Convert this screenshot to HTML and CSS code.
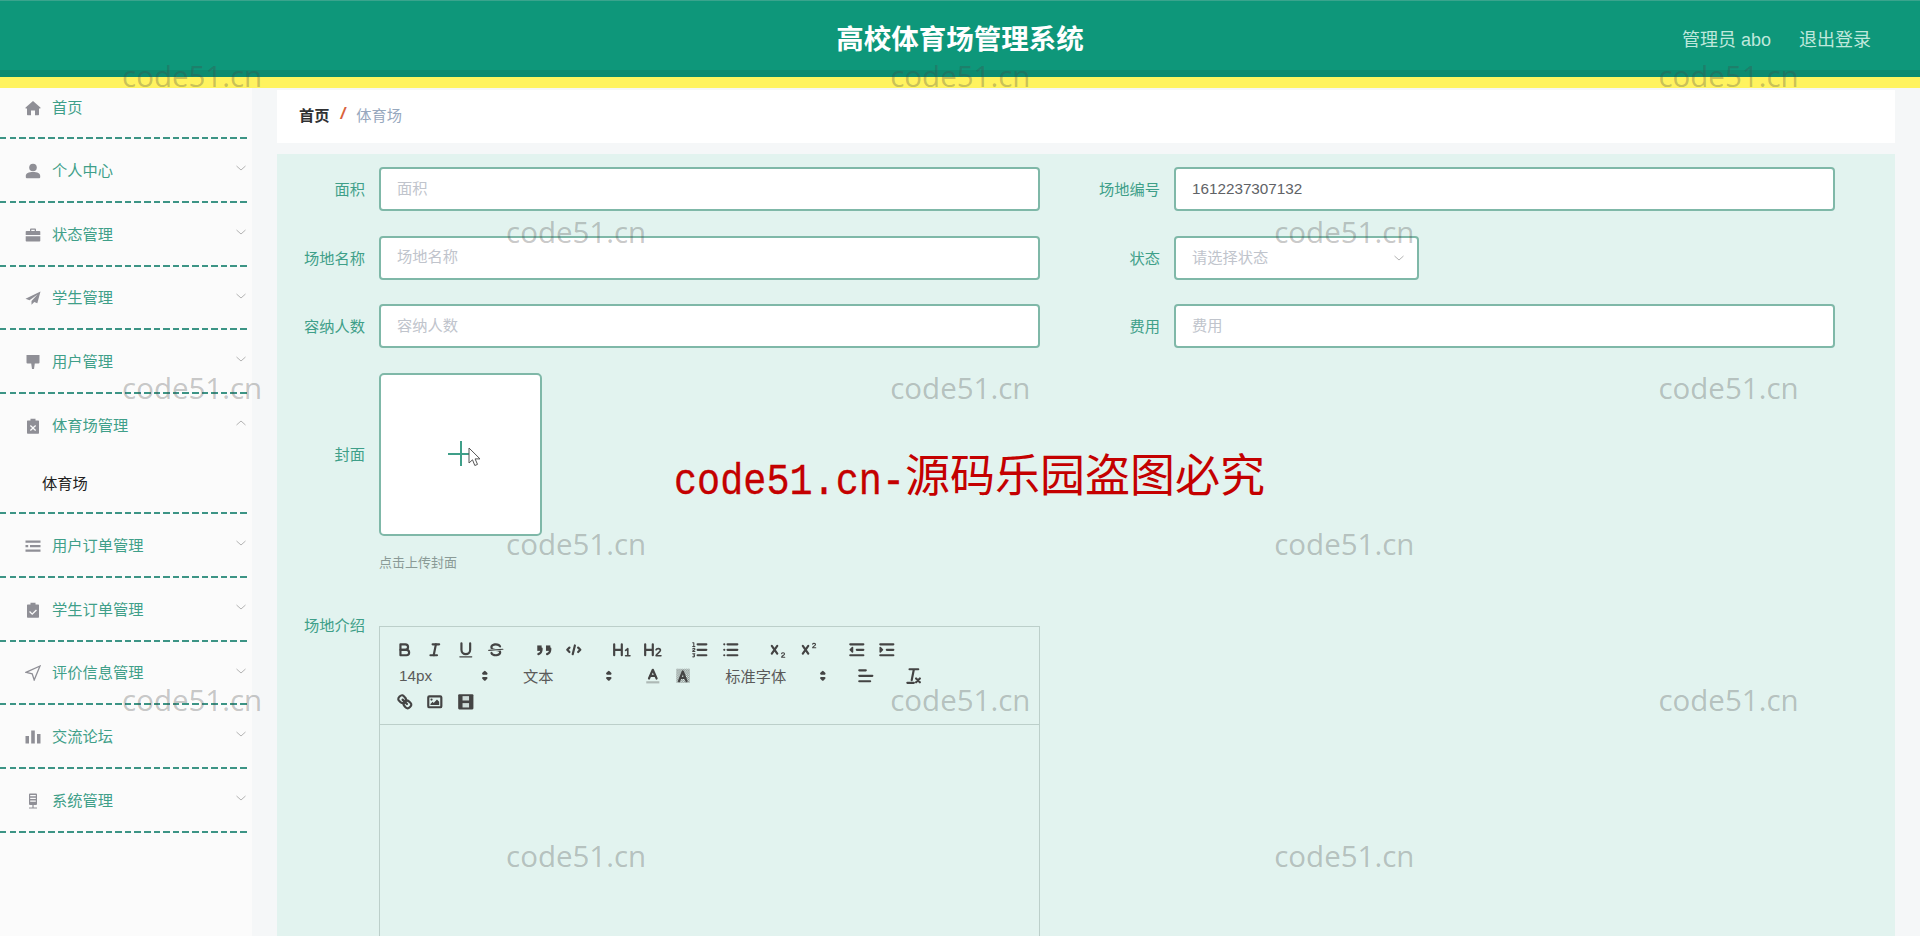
FILE: index.html
```html
<!DOCTYPE html>
<html lang="zh-CN">
<head>
    <meta charset="UTF-8">
    <meta name="viewport" content="width=device-width, initial-scale=1.0">
    <title>高校体育场管理系统</title>
    <link rel="stylesheet" href="styles.css">
</head>
<body>
    <header class="topbar">
        <h1 class="topbar-title">高校体育场管理系统</h1>
        <div class="topbar-user">
            <span class="user-name">管理员 abo</span>
            <a class="logout">退出登录</a>
        </div>
    </header>

    <div class="layout">
        <nav class="sidebar">
            <div class="menu-item menu-first">
                <svg class="menu-icon" viewBox="0 0 16 16"><path d="M8 1 .6 7.600c-.4.4 0 1 .5 1H2V14.500a.7.7 0 0 0 .7.7h3.300V10.500h4v4.700h3.300a.7.700 0 0 0 .7-.7V8.600h.9c.5 0 .9-.6.5-1z"/></svg>
                <span>首页</span>
            </div>
            <div class="menu-item">
                <svg class="menu-icon" viewBox="0 0 16 16"><circle cx="8" cy="4.500" r="3.800"/><path d="M.8 13c0-2.800 2.800-4 7.200-4s7.200 1.200 7.200 4v1.300a1 1 0 0 1-1 1H1.800a1 1 0 0 1-1-1z"/></svg>
                <span>个人中心</span>
                <svg class="menu-arrow" viewBox="0 0 12 12"><polyline points="1.500 4 6 8 10.500 4"/></svg>
            </div>
            <div class="menu-item">
                <svg class="menu-icon" viewBox="0 0 16 16"><path d="M5 4V2.500A1 1 0 0 1 6 1.500h4a1 1 0 0 1 1 1V4h3.500a.8.8 0 0 1 .8.8V8H.7V4.800A.8.800 0 0 1 1.500 4zm1.300 0h3.400V2.800H6.300zM.7 9.200h14.600v4.600a.8.8 0 0 1-.8.8h-13a.8.8 0 0 1-.8-.8z"/></svg>
                <span>状态管理</span>
                <svg class="menu-arrow" viewBox="0 0 12 12"><polyline points="1.500 4 6 8 10.500 4"/></svg>
            </div>
            <div class="menu-item">
                <svg class="menu-icon" viewBox="0 0 16 16"><path d="M15.500 1.500.5 8.800l4 1.500L12.500 4.500 6.500 11v3.800l2.800-2.900 3 1.300z"/></svg>
                <span>学生管理</span>
                <svg class="menu-arrow" viewBox="0 0 12 12"><polyline points="1.500 4 6 8 10.500 4"/></svg>
            </div>
            <div class="menu-item">
                <svg class="menu-icon" viewBox="0 0 16 16"><path d="M1.500 1h13v7.500a1 1 0 0 1-1 1H9.800l-.8 5.500H7l-.8-5.500H2.500a1 1 0 0 1-1-1z"/></svg>
                <span>用户管理</span>
                <svg class="menu-arrow" viewBox="0 0 12 12"><polyline points="1.500 4 6 8 10.500 4"/></svg>
            </div>
            <div class="menu-item menu-open">
                <svg class="menu-icon" viewBox="0 0 16 16"><path fill-rule="evenodd" d="M5.500 2.500V.8h5v1.700h2.800a.7.7 0 0 1 .7.700v11.800a.7.7 0 0 1-.7.700H2.700a.7.700 0 0 1-.7-.7V3.200a.7.7 0 0 1 .7-.7zM5.800 7l-.9.900L7.100 10 4.900 12.100l.9.900L8 10.900 10.200 13l.9-.9L8.900 10l2.200-2.100-.9-.9L8 9.100z"/></svg>
                <span>体育场管理</span>
                <svg class="menu-arrow" viewBox="0 0 12 12"><polyline points="1.500 8 6 4 10.500 8"/></svg>
            </div>
            <div class="menu-sub">体育场</div>
            <div class="menu-item">
                <svg class="menu-icon" viewBox="0 0 16 16"><path d="M.5 2.500h15v2.200H.5zM5 7h10.500v2.200H5zM.5 7h2.700v2.200H.500zM.5 11.500h15v2.200H.5z"/></svg>
                <span>用户订单管理</span>
                <svg class="menu-arrow" viewBox="0 0 12 12"><polyline points="1.500 4 6 8 10.500 4"/></svg>
            </div>
            <div class="menu-item">
                <svg class="menu-icon" viewBox="0 0 16 16"><path fill-rule="evenodd" d="M5.500 2.500V.8h5v1.700h2.800a.7.7 0 0 1 .7.700v11.800a.7.7 0 0 1-.7.700H2.700a.7.700 0 0 1-.7-.7V3.200a.7.7 0 0 1 .7-.7zM11 7.500 7.200 11.200 5 9.100l-.9.900 3.100 3 4.700-4.600z"/></svg>
                <span>学生订单管理</span>
                <svg class="menu-arrow" viewBox="0 0 12 12"><polyline points="1.500 4 6 8 10.500 4"/></svg>
            </div>
            <div class="menu-item">
                <svg class="menu-icon menu-icon-line" viewBox="0 0 16 16"><path d="M15 1 1 7.300l6.200 1.500L9.200 15z"/></svg>
                <span>评价信息管理</span>
                <svg class="menu-arrow" viewBox="0 0 12 12"><polyline points="1.500 4 6 8 10.500 4"/></svg>
            </div>
            <div class="menu-item">
                <svg class="menu-icon" viewBox="0 0 16 16"><path d="M.5 7h3.500v7.500H.5zM6.200 1.500h3.600v13H6.200zM12 5h3.500v9.500H12z"/></svg>
                <span>交流论坛</span>
                <svg class="menu-arrow" viewBox="0 0 12 12"><polyline points="1.500 4 6 8 10.500 4"/></svg>
            </div>
            <div class="menu-item">
                <svg class="menu-icon" viewBox="0 0 16 16"><path fill-rule="evenodd" d="M5 .5h6a1 1 0 0 1 1 1V11a1 1 0 0 1-1 1H5a1 1 0 0 1-1-1V1.500a1 1 0 0 1 1-1zM5.200 2v1.200h5.600V2zm0 2.800V6h5.600V4.800zm0 2.800v1.200h5.600V7.600zM7.400 12h1.200v2.500H12v1H4v-1h3.400z"/></svg>
                <span>系统管理</span>
                <svg class="menu-arrow" viewBox="0 0 12 12"><polyline points="1.500 4 6 8 10.500 4"/></svg>
            </div>
        </nav>

        <main class="main">
            <div class="breadcrumb">
                <span class="crumb-home">首页</span>
                <span class="crumb-sep">/</span>
                <span class="crumb-now">体育场</span>
            </div>

            <form class="form">
                <div class="form-grid">
                    <div class="field">
                        <label class="field-label">面积</label>
                        <input class="field-input" type="text" placeholder="面积">
                    </div>
                    <div class="field">
                        <label class="field-label">场地编号</label>
                        <input class="field-input" type="text" value="1612237307132">
                    </div>
                    <div class="field">
                        <label class="field-label">场地名称</label>
                        <input class="field-input" type="text" placeholder="场地名称">
                    </div>
                    <div class="field">
                        <label class="field-label">状态</label>
                        <div class="field-select">
                            <span>请选择状态</span>
                            <svg class="select-arrow" viewBox="0 0 12 12"><polyline points="1.500 4 6 8 10.500 4"/></svg>
                        </div>
                    </div>
                    <div class="field">
                        <label class="field-label">容纳人数</label>
                        <input class="field-input" type="text" placeholder="容纳人数">
                    </div>
                    <div class="field">
                        <label class="field-label">费用</label>
                        <input class="field-input" type="text" placeholder="费用">
                    </div>
                </div>

                <div class="field field-upload">
                    <label class="field-label">封面</label>
                    <div class="upload">
                        <span class="upload-plus"></span>
                        <svg class="cursor" viewBox="0 0 13 20"><path d="M1 1v15l3.500-3.200 2.300 5.700 2.700-1.100-2.400-5.500H12z"/></svg>
                    </div>
                </div>
                <p class="upload-tip">点击上传封面</p>

                <div class="field field-editor">
                    <label class="field-label">场地介绍</label>
                    <div class="editor">
                        <div class="toolbar">
                            <span class="tool-group">
                                <button type="button" class="tool"><svg viewBox="0 0 18 18"><path class="st" d="M5 4h4.500a2.500 2.500 0 0 1 0 5H5z"/><path class="st" d="M5 9h5.500a2.500 2.500 0 0 1 0 5H5z"/></svg></button>
                                <button type="button" class="tool"><svg viewBox="0 0 18 18"><line class="st" x1="7" x2="13" y1="4" y2="4"/><line class="st" x1="5" x2="11" y1="14" y2="14"/><line class="st" x1="8" x2="10" y1="14" y2="4"/></svg></button>
                                <button type="button" class="tool"><svg viewBox="0 0 18 18"><path class="st" d="M5 3v6a4 4 0 0 0 4 4 4 4 0 0 0 4-4V3"/><rect class="fl" x="3" y="15" width="12" height="1" rx=".5"/></svg></button>
                                <button type="button" class="tool"><svg viewBox="0 0 18 18"><line class="th" x1="15.500" x2="2.500" y1="8.500" y2="9.500"/><path class="fl" d="M9 8C6.500 7.800 6 7.500 6 6.500 6 5.800 7.300 5 9 5c1.600 0 2.800.7 3 1.300a1 1 0 0 0 1.900-.6C13.400 4.100 11.400 3 9 3 6.200 3 4 4.500 4 6.500a3.200 3.200 0 0 0 .5 1.800z"/><path class="fl" d="M9 10c2.500.2 3 .5 3 1.500 0 .7-1.300 1.500-3 1.500-1.600 0-2.800-.7-3-1.300a1 1 0 1 0-1.900.6C4.600 13.900 6.600 15 9 15c2.800 0 5-1.500 5-3.500a3.200 3.200 0 0 0-.5-1.800z"/></svg></button>
                            </span>
                            <span class="tool-group">
                                <button type="button" class="tool"><svg viewBox="0 0 18 18"><rect class="fl" x="3" y="5" width="4" height="5"/><rect class="fl" x="11" y="5" width="4" height="5"/><path class="st" d="M7 8c0 4-3 5-3 5"/><path class="st" d="M15 8c0 4-3 5-3 5"/></svg></button>
                                <button type="button" class="tool"><svg viewBox="0 0 18 18"><polyline class="st" points="5 7 3 9 5 11"/><polyline class="st" points="13 7 15 9 13 11"/><line class="st" x1="10" x2="8" y1="5" y2="13"/></svg></button>
                            </span>
                            <span class="tool-group">
                                <button type="button" class="tool"><svg viewBox="0 0 18 18"><path class="st" d="M2 4v10M9 4v10M2 9h7"/><path class="st1" d="M12.500 9.500 14.500 8v6M12.500 14.500h4"/></svg></button>
                                <button type="button" class="tool"><svg viewBox="0 0 18 18"><path class="st" d="M2 4v10M9 4v10M2 9h7"/><path class="st1" d="M12 9c.5-1.500 4-1.500 4 .5S12 12.500 12 14.500h4.500"/></svg></button>
                            </span>
                            <span class="tool-group">
                                <button type="button" class="tool"><svg viewBox="0 0 18 18"><path class="st" d="M7 4h8M7 9h8M7 14h8"/><path class="th" d="M2.500 2.500h1v3.500M2.500 6h2M2.500 8.200c1-1 2-.5 2 .2s-2 1.400-2 2.100h2M2.500 12.600h2l-1 1.200c1 0 1 2-1 1.600"/></svg></button>
                                <button type="button" class="tool"><svg viewBox="0 0 18 18"><path class="st" d="M6 4h9M6 9h9M6 14h9M3 4h0M3 9h0M3 14h0"/></svg></button>
                            </span>
                            <span class="tool-group">
                                <button type="button" class="tool"><svg viewBox="0 0 18 18"><path class="st" d="M3.500 5.500 8.500 12.500M8.500 5.500 3.500 12.500"/><path class="th" d="M12.500 12.500c.3-1 2.700-1 2.700.3s-2.700 1.700-2.700 3h2.900"/></svg></button>
                                <button type="button" class="tool"><svg viewBox="0 0 18 18"><path class="st" d="M3.500 5.500 8.500 12.500M8.500 5.500 3.500 12.500"/><path class="th" d="M12.500 3.800c.3-1 2.700-1 2.700.3s-2.700 1.700-2.700 3h2.900"/></svg></button>
                            </span>
                            <span class="tool-group">
                                <button type="button" class="tool"><svg viewBox="0 0 18 18"><path class="st" d="M3 14h12M3 4h12M9 9h6"/><polygon class="st1 fl" points="5 7 5 11 3 9"/></svg></button>
                                <button type="button" class="tool"><svg viewBox="0 0 18 18"><path class="st" d="M3 14h12M3 4h12M9 9h6"/><polygon class="st1 fl" points="3 7 3 11 5 9"/></svg></button>
                            </span>
                            <span class="tool-group">
                                <span class="picker">
                                    <span>14px</span>
                                    <svg viewBox="0 0 18 18"><polygon class="st fl" points="7.500 11 9 12.500 10.500 11"/><polygon class="st fl" points="7.500 7 9 5.500 10.500 7"/></svg>
                                </span>
                            </span>
                            <span class="tool-group">
                                <span class="picker">
                                    <span>文本</span>
                                    <svg viewBox="0 0 18 18"><polygon class="st fl" points="7.500 11 9 12.500 10.500 11"/><polygon class="st fl" points="7.500 7 9 5.500 10.500 7"/></svg>
                                </span>
                            </span>
                            <span class="tool-group">
                                <button type="button" class="tool"><svg viewBox="0 0 18 18"><line class="color-line" x1="3" x2="15" y1="15" y2="15"/><polyline class="st" points="5.500 11.500 9 3.500 12.500 11.500"/><line class="st" x1="11" x2="7" y1="9" y2="9"/></svg></button>
                                <button type="button" class="tool"><svg viewBox="0 0 18 18"><defs><pattern id="dots" width="2" height="2" patternUnits="userSpaceOnUse"><rect class="fl" width="1" height="1"/><rect class="fl" x="1" y="1" width="1" height="1"/></pattern></defs><rect class="bg-hatch" x="3" y="2.500" width="12.500" height="13" fill="url(#dots)"/><polyline class="st" points="5.500 14 9 5 12.500 14"/><line class="st" x1="11" x2="7" y1="11" y2="11"/></svg></button>
                            </span>
                            <span class="tool-group">
                                <span class="picker picker-wide">
                                    <span>标准字体</span>
                                    <svg viewBox="0 0 18 18"><polygon class="st fl" points="7.500 11 9 12.500 10.500 11"/><polygon class="st fl" points="7.500 7 9 5.500 10.500 7"/></svg>
                                </span>
                            </span>
                            <span class="tool-group">
                                <button type="button" class="tool"><svg viewBox="0 0 18 18"><path class="st" d="M3 9h12M3 14h10M3 4h6"/></svg></button>
                            </span>
                            <span class="tool-group">
                                <button type="button" class="tool"><svg viewBox="0 0 18 18"><path class="st" d="M6 3h8M10 3 8 13M4 15.500h6"/><path class="st" d="M12 11.500l3.500 3.500M15.500 11.500 12 15"/></svg></button>
                            </span>
                            <span class="tool-group">
                                <button type="button" class="tool"><svg viewBox="0 0 18 18"><line class="st" x1="7" x2="11" y1="7" y2="11"/><path class="st" d="M8.900 4.600a3.500 3.500 0 0 1 .4 4.700 3.500 3.500 0 0 1-4.700-.4C3.200 7.500 2 6.400 4.200 4.200S7.500 3.200 8.900 4.600z"/><path class="st" d="M13.400 9.100a3.500 3.500 0 0 0-4.700-.4 3.500 3.500 0 0 0 .4 4.700c1.400 1.400 2.500 2.600 4.700.4s1-3.300-.4-4.700z"/></svg></button>
                                <button type="button" class="tool"><svg viewBox="0 0 18 18"><rect class="st" x="3" y="4" width="12" height="10" rx="1"/><circle class="fl" cx="6" cy="7" r="1"/><polygon class="fl" points="5 12 5 11 7 9 8 10 11 7 13 9 13 12"/></svg></button>
                                <button type="button" class="tool"><svg viewBox="0 0 18 18"><rect class="fl" x="2" y="2" width="14" height="14" rx="1"/><rect class="video-window" x="6" y="3.800" width="6" height="4"/><rect class="video-window" x="6" y="10.200" width="6" height="4"/></svg></button>
                            </span>
                        </div>
                        <div class="editor-body"></div>
                    </div>
                </div>
            </form>
        </main>
    </div>

    <!-- overlays baked into the picture -->
    <div class="watermarks">
        <div class="wm-row"><span>code51.cn</span><span>code51.cn</span><span>code51.cn</span></div>
        <div class="wm-row wm-row-shift"><span>code51.cn</span><span>code51.cn</span></div>
        <div class="wm-row"><span>code51.cn</span><span>code51.cn</span><span>code51.cn</span></div>
        <div class="wm-row wm-row-shift"><span>code51.cn</span><span>code51.cn</span></div>
        <div class="wm-row"><span>code51.cn</span><span>code51.cn</span><span>code51.cn</span></div>
        <div class="wm-row wm-row-shift"><span>code51.cn</span><span>code51.cn</span></div>
    </div>
    <div class="stamp"><span class="stamp-latin">code51.cn-</span>源码乐园盗图必究</div>
</body>
</html>
```

FILE: styles.css
```css
* {
    box-sizing: border-box;
}

html, body {
    margin: 0;
    height: 100%;
}

body {
    font-family: "Liberation Sans", "Noto Sans CJK SC", sans-serif;
    font-size: 15.26px;
    background-color: #f5f7f8;
    overflow: hidden;
    display: flex;
    flex-direction: column;
}

/* top bar */
.topbar {
    flex: none;
    height: 88px;
    display: flex;
    align-items: center;
    justify-content: center;
    background-color: #0e977a;
    border-top: 1px solid #3aa48d;
    border-bottom: 11px solid #fff35f;
    box-shadow: inset 0 -7px 0 #0d8a6f;
    padding-bottom: 5px;
    position: relative;
}

.topbar-title {
    margin: 0;
    font-size: 27.5px;
    font-weight: 700;
    color: #fff;
}

.topbar-user {
    position: absolute;
    right: 49px;
    top: 24px;
    display: flex;
    gap: 28px;
    font-size: 18px;
    color: #bfe8dc;
}

/* side menu */
.layout {
    flex: 1;
    display: flex;
    min-height: 0;
}

.sidebar {
    flex: none;
    width: 252px;
    padding-right: 2px;
    background-color: #fbfbfb;
    color: #3f9f89;
}

.menu-item,
.menu-sub {
    background: repeating-linear-gradient(to right, #3c9485 0 6.500px, transparent 6.500px 9.600px) left bottom / 100% 2px no-repeat;
}

.menu-item {
    height: 63.75px;
    display: flex;
    align-items: center;
    padding: 0 2px 4px 25px;
    position: relative;
}

.menu-first {
    height: 51px;
    padding-bottom: 15px;
}

.menu-open {
    background: none;
}

.menu-icon {
    width: 16px;
    height: 16px;
    margin: 4px 11px 0 0;
    fill: #8f8f96;
    flex: none;
}

.menu-icon-line {
    fill: none;
    stroke: #8f8f96;
    stroke-width: 1.300;
}

.menu-arrow {
    position: absolute;
    right: 3px;
    top: 23px;
    width: 12px;
    height: 12px;
    fill: none;
    stroke: #b3b3b3;
    stroke-width: 1;
}

.menu-sub {
    height: 56.250px;
    display: flex;
    align-items: center;
    padding: 0 0 8px 42px;
    color: #222;
}

/* main column */
.main {
    flex: 1;
    min-width: 0;
    display: flex;
    flex-direction: column;
    padding: 2px 25px 0;
}

.breadcrumb {
    flex: none;
    height: 53px;
    background-color: #fff;
    display: flex;
    align-items: center;
    padding: 0 0 6px 22px;
    margin-bottom: 11px;
}

.crumb-home {
    font-weight: 700;
    color: #303133;
}

.crumb-sep {
    margin: 0 11px;
    font-size: 17px;
    font-weight: 700;
    font-style: italic;
    color: #d9623b;
}

.crumb-now {
    color: #97a8be;
}

.form {
    flex: 1;
    min-height: 0;
    background-color: #e2f3ef;
    padding-top: 13px;
    overflow: hidden;
}

.form-grid {
    display: grid;
    grid-template-columns: 763px 763px;
    column-gap: 32px;
    row-gap: 24.5px;
}

.field {
    display: flex;
    align-items: center;
}

.field-label {
    flex: none;
    width: 88px;
    margin-right: 14px;
    padding-bottom: 2px;
    text-align: right;
    color: #3f9f89;
}

.field-input,
.field-select {
    flex: 1;
    height: 44px;
    min-width: 0;
    padding: 0 16px 2px;
    font: inherit;
    color: #606266;
    background-color: #fff;
    border: 2px solid #7fb8a8;
    border-radius: 4px;
    outline: none;
}

.field-input::placeholder {
    color: #c0c4cc;
}

.field-select {
    flex: none;
    width: 245px;
    display: flex;
    align-items: center;
    justify-content: space-between;
    padding-bottom: 4px;
    color: #c0c4cc;
}

.select-arrow {
    width: 12px;
    height: 12px;
    margin: 4px -4px 0 0;
    fill: none;
    stroke: #b3b3b3;
    stroke-width: 1;
}

/* cover upload */
.field-upload {
    margin-top: 25px;
}

.field-upload .field-label {
    padding-bottom: 4px;
}

.upload {
    width: 163px;
    height: 163px;
    background-color: #fff;
    border: 2px solid #7fb8a8;
    border-radius: 5px;
    position: relative;
}

.upload-plus {
    position: absolute;
    left: 67px;
    top: 66px;
    width: 25px;
    height: 25px;
    background:
        linear-gradient(#3f9f89, #3f9f89) center / 100% 2px no-repeat,
        linear-gradient(#3f9f89, #3f9f89) center / 2px 100% no-repeat;
}

.cursor {
    position: absolute;
    left: 87px;
    top: 72px;
    width: 13px;
    height: 20px;
    fill: #fff;
    stroke: #555;
    stroke-width: 1;
}

.upload-tip {
    margin: 19px 0 0 102px;
    font-size: 13px;
    line-height: 16px;
    color: #8a9a96;
}

/* rich text editor */
.field-editor {
    align-items: flex-start;
    margin-top: 43px;
}

.field-editor .field-label {
    margin-top: 2px;
    padding-bottom: 0;
    line-height: 20px;
}

.editor {
    flex: none;
    width: 661px;
    margin-top: 12px;
    border: 1px solid #bccfca;
}

.toolbar {
    display: flex;
    flex-wrap: wrap;
    padding: 10px 9px 9px;
    border-bottom: 1px solid #bccfca;
    color: #555;
}

.tool-group {
    display: inline-flex;
    margin-right: 17px;
}

.tool {
    width: 30.6px;
    height: 26px;
    padding: 3px 5.500px;
    border: none;
    background: none;
    display: block;
}

.tool svg {
    display: block;
    width: 19.6px;
    height: 19.6px;
}

.st, .st1, .th {
    fill: none;
    stroke: #444;
    stroke-linecap: round;
    stroke-linejoin: round;
}

.st {
    stroke-width: 2;
}

.st1 {
    stroke-width: 1.500;
}

.th {
    stroke-width: 1;
}

.st.fl, .st1.fl {
    fill: #444;
}

.fl {
    fill: #444;
}

.bg-hatch {
    opacity: 0.65;
}

.video-window {
    fill: #cfdcd9;
}

.color-line {
    stroke: #aeb9b6;
    stroke-width: 2;
}

.picker {
    width: 107px;
    height: 26px;
    padding: 0 1px 2px 10px;
    display: flex;
    align-items: center;
    justify-content: space-between;
    color: #5a5a5a;
}

.picker svg {
    width: 19.6px;
    height: 19.6px;
    margin-top: 2px;
}

.picker-wide {
    width: 118px;
}

.editor-body {
    height: 400px;
}

/* picture overlays */
.watermarks {
    position: absolute;
    left: 0;
    top: 56px;
    width: 100%;
    display: flex;
    flex-direction: column;
    gap: 116px;
    pointer-events: none;
}

.wm-row {
    display: flex;
    gap: 628px;
    padding-left: 122px;
    height: 40px;
    line-height: 40px;
    font-family: "Open Sans", sans-serif;
    font-size: 29.500px;
    color: rgba(70, 70, 70, 0.3);
}

.wm-row-shift {
    padding-left: 506px;
}

.stamp {
    position: absolute;
    left: 674px;
    top: 441px;
    font-family: "Noto Sans CJK SC", sans-serif;
    font-size: 45px;
    line-height: 64px;
    color: #c40000;
    white-space: nowrap;
}

.stamp-latin {
    display: inline-block;
    font-family: "Liberation Mono", monospace;
    font-size: 38.500px;
    transform: scaleY(1.150);
    -webkit-text-stroke: 0.3px #c40000;
}
```
